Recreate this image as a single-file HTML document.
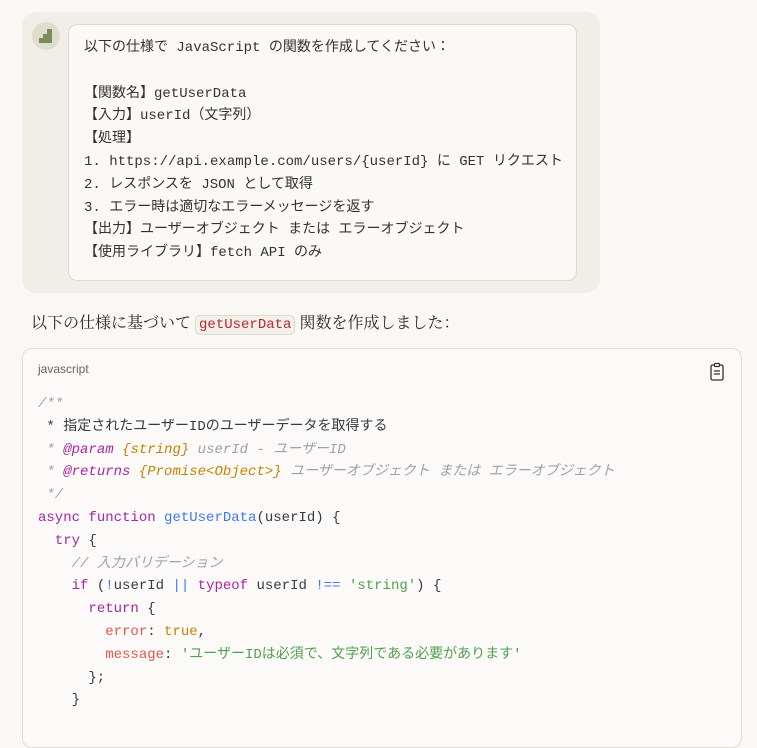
<!DOCTYPE html>
<html><head><meta charset="utf-8"><style>
body{margin:0;background:#f9f8f5;width:757px;height:706px;overflow:hidden;font-family:"Liberation Sans","Noto Sans CJK JP",sans-serif;color:#2b2a27}
.ub{position:absolute;left:22px;top:12px;width:578px;height:281px;background:#f0eee6;border-radius:14px}
.av{position:absolute;left:32px;top:22px;width:28px;height:28px;border-radius:50%;background:#e0dccf}
.in{position:absolute;left:68px;top:24px;width:509px;height:257px;background:#faf9f5;border:1px solid #dcd9d0;border-radius:9px;box-sizing:border-box}
.ut{position:absolute;left:84px;top:37px;font-family:"Liberation Mono","Noto Sans CJK JP",monospace;font-size:14px;line-height:22.8px;white-space:pre;color:#333}
.resp{position:absolute;left:31px;top:312px;font-family:"Liberation Serif","Noto Serif CJK SC",serif;font-size:16px;line-height:24px;color:#2b2a27}
.ic{font-family:"Liberation Mono",monospace;font-size:14px;color:#b5272d;background:#f3f0ea;border:1px solid #dedad0;border-radius:5px;padding:1px 3px}
.cb{position:absolute;left:22px;top:348px;width:720px;height:400px;background:#fbfaf8;border:1px solid #e0ddd6;border-radius:10px;box-sizing:border-box}
.lbl{position:absolute;left:38px;top:362px;font-size:12px;color:#666}
.code{position:absolute;left:38px;top:393px;font-family:"Liberation Mono","Noto Sans CJK JP",monospace;font-size:14px;line-height:22.8px;white-space:pre;color:#383a42}
.c{color:#a0a1a7;font-style:italic}.k{color:#a626a4}.f{color:#4078f2}.t{color:#c18401}.s{color:#50a14f}.p{color:#e45649}.o{color:#4078f2}
</style></head><body>
<div class="ub"></div>
<div class="av"><svg width="28" height="28"><path d="M7 21V16h4v-4h4V7h5v14z" fill="#7c8b5a"/></svg></div>
<div class="in"></div>
<div class="ut">以下の仕様で JavaScript の関数を作成してください：

【関数名】getUserData
【入力】userId（文字列）
【処理】
1. https://api.example.com/users/{userId} に GET リクエスト
2. レスポンスを JSON として取得
3. エラー時は適切なエラーメッセージを返す
【出力】ユーザーオブジェクト または エラーオブジェクト
【使用ライブラリ】fetch API のみ</div>
<div class="resp">以下の仕様に基づいて <span class="ic">getUserData</span> 関数を作成しました：</div>
<div class="cb"></div>
<div class="lbl">javascript</div>
<svg style="position:absolute;left:709px;top:362px" width="16" height="20" viewBox="0 0 16 20"><rect x="2" y="3" width="12" height="15" rx="1.5" fill="none" stroke="#333" stroke-width="1.3"/><rect x="5.5" y="1.5" width="5" height="3" rx="1" fill="#fbfaf8" stroke="#333" stroke-width="1.2"/><path d="M5 9h6M5 12h6" stroke="#333" stroke-width="1.2"/></svg>
<div class="code"><span class="c">/**</span>
 * 指定されたユーザーIDのユーザーデータを取得する
<span class="c"> * </span><span class="k" style="font-style:italic">@param</span><span class="c"> </span><span class="t" style="font-style:italic">{string}</span><span class="c"> userId - ユーザーID</span>
<span class="c"> * </span><span class="k" style="font-style:italic">@returns</span><span class="c"> </span><span class="t" style="font-style:italic">{Promise&lt;Object&gt;}</span><span class="c"> ユーザーオブジェクト または エラーオブジェクト</span>
<span class="c"> */</span>
<span class="k">async</span> <span class="k">function</span> <span class="f">getUserData</span>(userId) {
  <span class="k">try</span> {
    <span class="c">// 入力バリデーション</span>
    <span class="k">if</span> (<span class="o">!</span>userId <span class="o">||</span> <span class="k">typeof</span> userId <span class="o">!==</span> <span class="s">'string'</span>) {
      <span class="k">return</span> {
        <span class="p">error</span>: <span class="t">true</span>,
        <span class="p">message</span>: <span class="s">'ユーザーIDは必須で、文字列である必要があります'</span>
      };
    }</div>
</body></html>
